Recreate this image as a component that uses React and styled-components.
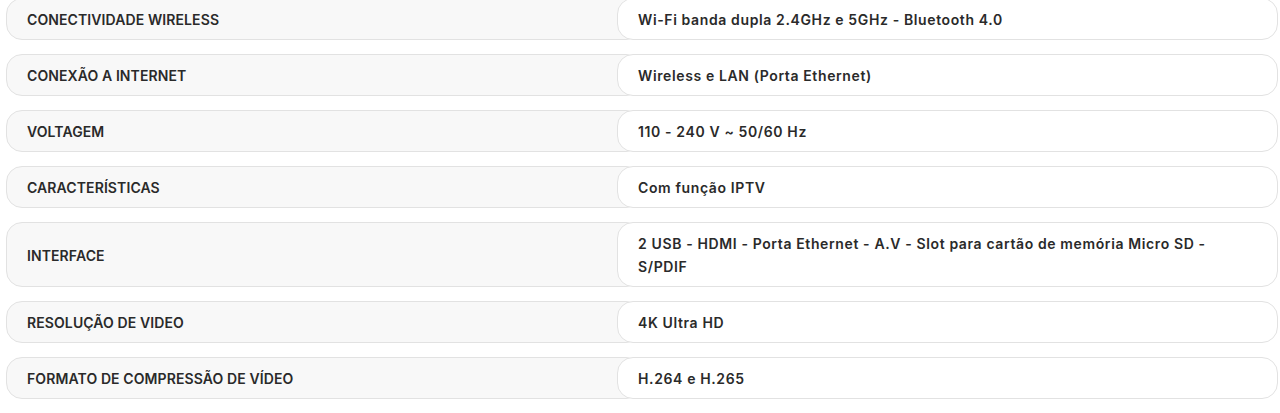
import React from "react";
import styled, { createGlobalStyle } from "styled-components";

const specs = [
  ["CONECTIVIDADE WIRELESS", "Wi-Fi banda dupla 2.4GHz e 5GHz - Bluetooth 4.0"],
  ["CONEXÃO A INTERNET", "Wireless e LAN (Porta Ethernet)"],
  ["VOLTAGEM", "110 - 240 V ~ 50/60 Hz"],
  ["CARACTERÍSTICAS", "Com função IPTV"],
  [
    "INTERFACE",
    "2 USB - HDMI - Porta Ethernet - A.V - Slot para cartão de memória Micro SD - S/PDIF",
  ],
  ["RESOLUÇÃO DE VIDEO", "4K Ultra HD"],
  ["FORMATO DE COMPRESSÃO DE VÍDEO", "H.264 e H.265"],
];

const App = () => {
  return (
    <>
      <GlobalStyle />
      <SpecList>
        {specs.map(([label, value]) => (
          <SpecRow key={label}>
            <Label>{label}</Label>
            <Value>{value}</Value>
          </SpecRow>
        ))}
      </SpecList>
    </>
  );
};

export default App;

// #######################################
// CSS
// #######################################

const GlobalStyle = createGlobalStyle`
  body {
    margin: 0;
    background: #ffffff;
    font-family: "Inter", "Open Sans", sans-serif;
    overflow: hidden;
  }
`;

const SpecList = styled.div`
  display: flex;
  flex-direction: column;
  gap: 14px;
  margin-top: -2px;
  padding: 0 2px 0 6px;
`;

const SpecRow = styled.div`
  display: grid;
  grid-template-columns: 1fr 1fr;
  color: #2a2a2a;
  font-size: 14px;
  font-weight: 600;
  line-height: 23px;
`;

const Cell = styled.div`
  display: flex;
  align-items: center;
  padding: 9px 20px 8px;
  border: 1px solid #e2e2e2;
  border-radius: 16px;
`;

const Label = styled(Cell)`
  background: #f8f8f8;
  text-transform: uppercase;
  letter-spacing: 0.1px;
`;

const Value = styled(Cell)`
  position: relative;
  margin-left: -25px;
  background: #ffffff;
  padding-right: 40px;
  letter-spacing: 0.62px;
`;
